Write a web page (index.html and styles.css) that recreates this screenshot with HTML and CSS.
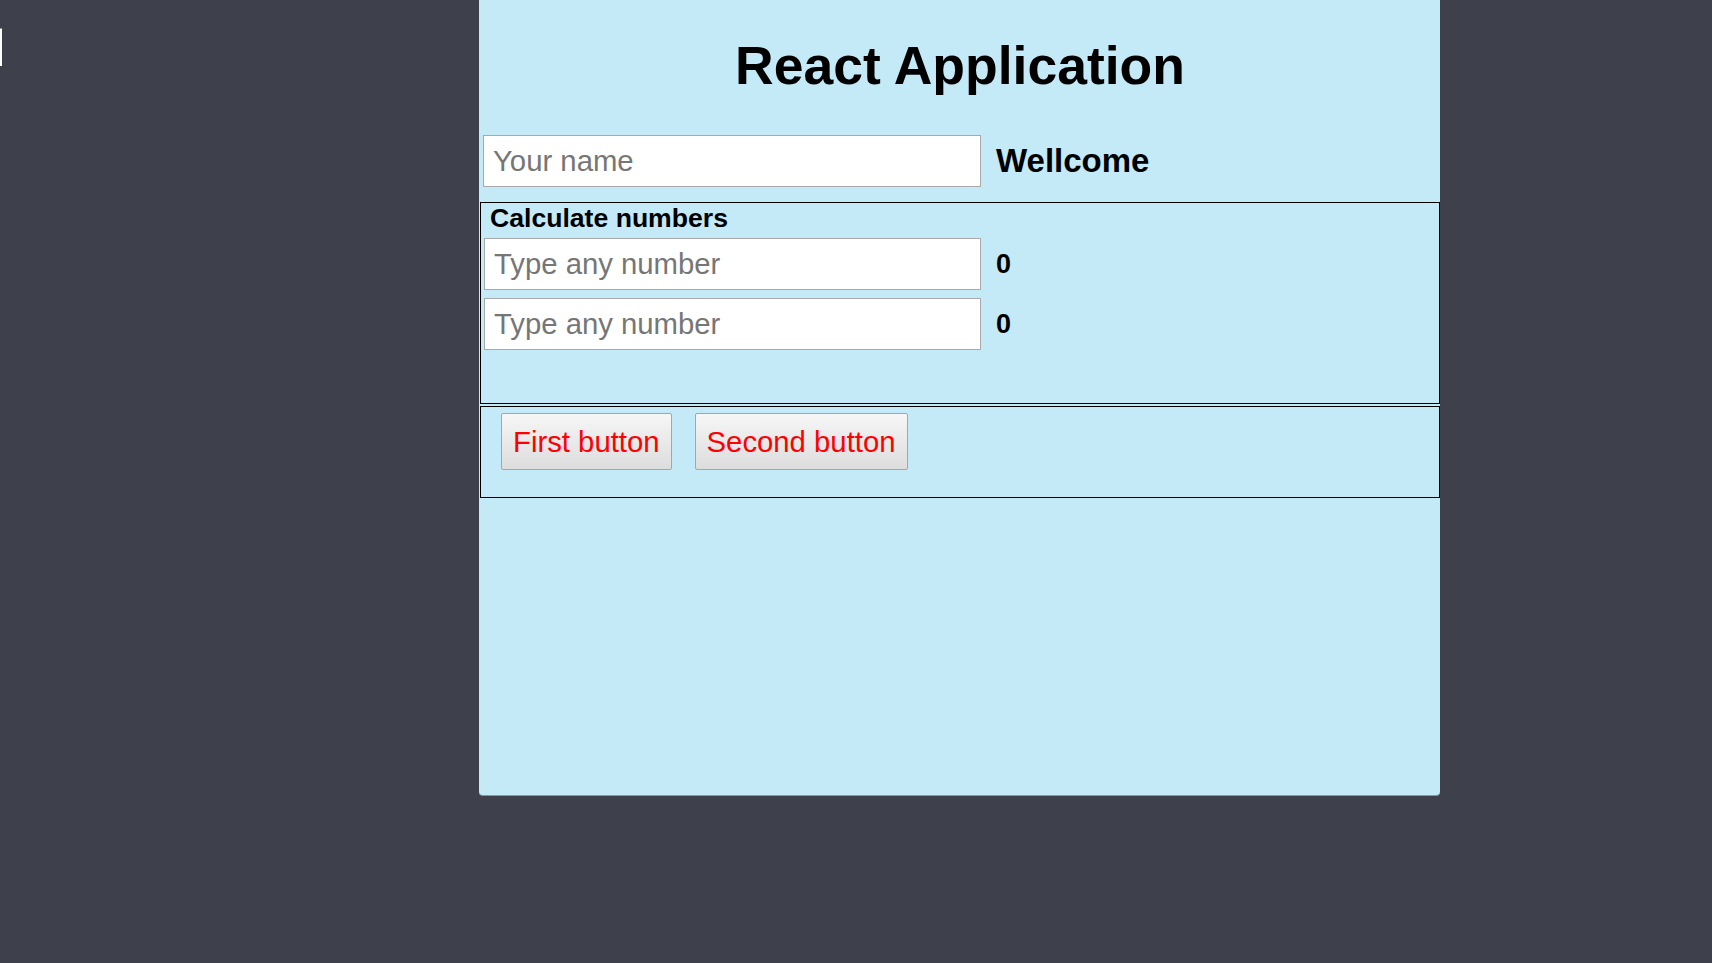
FILE: index.html
```html
<!DOCTYPE html>
<html lang="en">
<head>
<meta charset="utf-8">
<title>React Application</title>
<link rel="stylesheet" href="styles.css">
</head>
<body>
<div class="edge-stub"></div>
<div class="app">
  <h1 class="title">React Application</h1>
  <div class="name-row">
    <input class="field name-field" type="text" placeholder="Your name">
    <span class="greeting">Wellcome</span>
  </div>
  <div class="box calc-box">
    <div class="calc-label">Calculate numbers</div>
    <div class="num-row">
      <input class="field num-field" type="text" placeholder="Type any number">
      <span class="result">0</span>
    </div>
    <div class="num-row">
      <input class="field num-field" type="text" placeholder="Type any number">
      <span class="result">0</span>
    </div>
  </div>
  <div class="box button-box">
    <button class="btn" type="button">First button</button>
    <button class="btn" type="button">Second button</button>
  </div>
</div>
</body>
</html>
```

FILE: styles.css
```css
html, body {
  margin: 0;
  padding: 0;
}

body {
  background: #3e404c;
  font-family: "Liberation Sans", Arial, sans-serif;
  min-height: 963px;
  position: relative;
}

.edge-stub {
  position: absolute;
  left: 0;
  top: 28px;
  width: 2px;
  height: 37px;
  background: #ffffff;
  border-top: 1px solid #9a9a9a;
}

.app {
  margin-left: 479px;
  width: 960px;
  height: 795px;
  padding-left: 1px;
  background: #c4e9f7;
  border-bottom: 1px solid #8d949c;
  border-radius: 0 0 4px 4px;
  display: flex;
  flex-direction: column;
}

.title {
  margin: 35px 0 0 0;
  font-size: 53.5px;
  font-weight: bold;
  line-height: normal;
  text-align: center;
  color: #000;
}

.name-row {
  display: flex;
  align-items: center;
  margin-top: 39px;
  padding-left: 3px;
}

.field {
  box-sizing: border-box;
  height: 52px;
  border: 1px solid #a9a9a9;
  background: #ffffff;
  font-family: "Liberation Sans", Arial, sans-serif;
  font-size: 29.3px;
  padding: 0 9px;
  color: #000;
  outline: none;
}

.field::placeholder {
  color: #767676;
}

.name-field {
  width: 498px;
}

.greeting {
  margin-left: 15px;
  font-size: 33px;
  font-weight: bold;
  color: #000;
}

.box {
  box-sizing: border-box;
  border: 1px solid #000;
  width: 960px;
}

.calc-box {
  margin-top: 15px;
  height: 202px;
  padding: 0 0 0 3px;
}

.calc-label {
  padding-left: 6px;
  font-size: 26.6px;
  font-weight: bold;
  line-height: 30px;
  color: #000;
  margin-bottom: 5px;
}

.num-row {
  display: flex;
  align-items: center;
  margin-bottom: 8px;
}

.num-field {
  width: 497px;
}

.result {
  margin-left: 15px;
  font-size: 27px;
  font-weight: bold;
  color: #000;
}

.button-box {
  margin-top: 2px;
  height: 92px;
  padding: 6px 0 0 20px;
  display: flex;
  align-items: flex-start;
  gap: 23px;
}

.btn {
  box-sizing: border-box;
  height: 57px;
  padding: 0 11px;
  border: 1px solid #a6a6a6;
  border-radius: 2px;
  background: linear-gradient(to bottom, #f6f6f6, #dddddd);
  color: #ff0000;
  font-family: "Liberation Sans", Arial, sans-serif;
  font-size: 29.3px;
  line-height: normal;
  cursor: pointer;
}
```
